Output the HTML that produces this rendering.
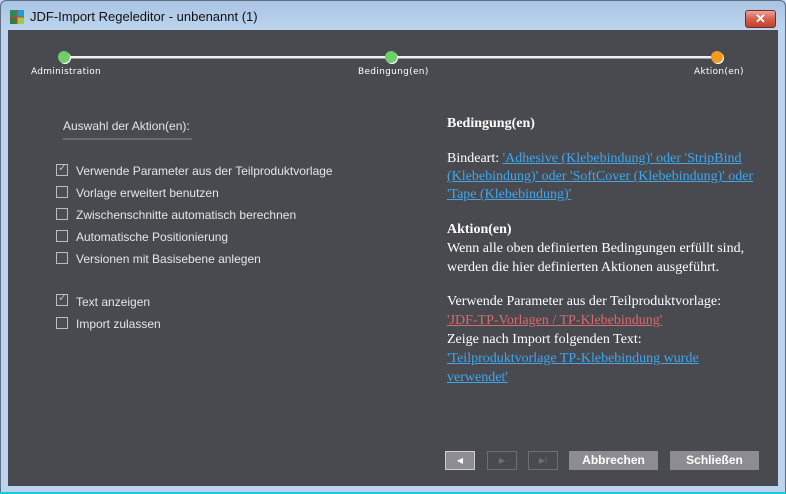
<!DOCTYPE html>
<html><head><meta charset="utf-8"><style>
*{margin:0;padding:0;box-sizing:border-box}
body{width:786px;height:494px;overflow:hidden;position:relative;background:#bcd4ee;font-family:"Liberation Sans",sans-serif}
.frame{position:absolute;left:0;top:0;width:786px;height:494px;border:1px solid #5f6f84;border-radius:6px 6px 0 0;background:linear-gradient(#a9c4e3,#bcd4ee 30px,#bcd4ee);}
.bot{position:absolute;left:0;top:492px;width:786px;height:2px;background:#1ec6d6}
.title{position:absolute;left:30px;top:9px;font-size:13px;color:#111;font-family:"Liberation Sans",sans-serif}
.icon{position:absolute;left:10px;top:10px;width:14px;height:14px}
.close{position:absolute;left:745px;top:10px;width:31px;height:18px;border:1px solid #7a2a24;border-radius:3px;background:linear-gradient(#e8a598,#d4604d 50%,#c0402e);color:#fff;font-weight:bold;font-size:13px;text-align:center;line-height:15px}
.content{position:absolute;left:8px;top:30px;width:770px;height:456px;background:#494950}
.a{position:absolute;white-space:nowrap}
.sm{font-family:"DejaVu Sans",sans-serif;font-size:9px;color:#fff;letter-spacing:0.3px}
.dot{position:absolute;width:12px;height:12px;border-radius:50%}
.cb{position:absolute;left:56px;width:12px;height:12px;border:1px solid #bdbdbd;background:#4c4c53}
.lbl{position:absolute;left:76px;font-size:12px;color:#e6e6e6}
.s{position:absolute;left:447px;font-family:"Liberation Serif",serif;font-size:14px;color:#fff;white-space:nowrap}
.lk{color:#3ea8ee;text-decoration:underline}
.rd{color:#d96a6a;text-decoration:underline}
.btn{position:absolute;top:451px;height:19px;background:#8c8c92;color:#fff;font-weight:bold;font-size:12px;text-align:center;line-height:19px}
.nb{position:absolute;top:451px;width:30px;height:19px;border:1px solid #6e6e76;color:#6e6e76;font-size:8px;text-align:center;line-height:17px}
</style></head><body>
<div class="frame"></div>
<svg class="icon" viewBox="0 0 14 14"><rect x="0" y="0" width="7" height="7" fill="#2a8a5a"/><rect x="7" y="0" width="7" height="7" fill="#1aa0d0"/><rect x="0" y="7" width="7" height="7" fill="#3a7a40"/><rect x="7" y="7" width="7" height="7" fill="#9ccc3a"/><path d="M0 7H14M7 0V14" stroke="#d33" stroke-width="1"/></svg>
<div class="title">JDF-Import Regeleditor - unbenannt (1)</div>
<div class="close">✕</div>
<div class="content"></div>
<div class="a" style="left:68px;top:56px;width:648px;height:3px;background:#f0f0f0;border-bottom:1px solid #999"></div>
<div class="dot" style="left:58px;top:51px;background:#6ccf6a;box-shadow:1px 1px 0 #fff"></div>
<div class="dot" style="left:385px;top:51px;background:#6ccf6a;box-shadow:1px 1px 0 #fff"></div>
<div class="dot" style="left:711px;top:51px;background:#f59a1e;box-shadow:1px 1px 0 #fff"></div>
<div class="a sm" style="left:31px;top:67px">Administration</div>
<div class="a sm" style="left:358px;top:67px">Bedingung(en)</div>
<div class="a sm" style="left:694px;top:67px">Aktion(en)</div>
<div class="a" style="left:63px;top:119px;font-size:12px;color:#e6e6e6">Auswahl der Aktion(en):</div>
<div class="a" style="left:63px;top:138px;width:129px;height:2px;background:#6a6a72"></div>
<div class="cb" style="top:164px"></div><div class="a" style="left:58px;top:161px;font-size:11px;color:#bbb">✓</div><div class="lbl" style="top:164px">Verwende Parameter aus der Teilproduktvorlage</div>
<div class="cb" style="top:186px"></div><div class="lbl" style="top:186px">Vorlage erweitert benutzen</div>
<div class="cb" style="top:208px"></div><div class="lbl" style="top:208px">Zwischenschnitte automatisch berechnen</div>
<div class="cb" style="top:230px"></div><div class="lbl" style="top:230px">Automatische Positionierung</div>
<div class="cb" style="top:252px"></div><div class="lbl" style="top:252px">Versionen mit Basisebene anlegen</div>
<div class="cb" style="top:294px"></div><div class="a" style="left:58px;top:291px;font-size:11px;color:#bbb">✓</div><div class="lbl" style="top:295px">Text anzeigen</div>
<div class="cb" style="top:317px"></div><div class="lbl" style="top:317px">Import zulassen</div>
<div class="s" style="top:116px;font-weight:bold">Bedingung(en)</div>
<div class="s" style="top:151px">Bindeart: <span class="lk">'Adhesive (Klebebindung)' oder 'StripBind</span></div>
<div class="s" style="top:169px"><span class="lk">(Klebebindung)' oder 'SoftCover (Klebebindung)' oder</span></div>
<div class="s" style="top:187px"><span class="lk">'Tape (Klebebindung)'</span></div>
<div class="s" style="top:222px;font-weight:bold">Aktion(en)</div>
<div class="s" style="top:241px">Wenn alle oben definierten Bedingungen erfüllt sind,</div>
<div class="s" style="top:260px">werden die hier definierten Aktionen ausgeführt.</div>
<div class="s" style="top:294px">Verwende Parameter aus der Teilproduktvorlage:</div>
<div class="s" style="top:313px"><span class="rd">'JDF-TP-Vorlagen / TP-Klebebindung'</span></div>
<div class="s" style="top:332px">Zeige nach Import folgenden Text:</div>
<div class="s" style="top:351px"><span class="lk">'Teilproduktvorlage TP-Klebebindung wurde</span></div>
<div class="s" style="top:370px"><span class="lk">verwendet'</span></div>
<div class="nb" style="left:445px;background:#8c8c92;border-color:#d0d0d4;color:#fff">◀</div>
<div class="nb" style="left:487px">▶</div>
<div class="nb" style="left:528px">▶|</div>
<div class="btn" style="left:569px;width:89px">Abbrechen</div>
<div class="btn" style="left:670px;width:89px">Schließen</div>
<div class="bot"></div>
</body></html>
